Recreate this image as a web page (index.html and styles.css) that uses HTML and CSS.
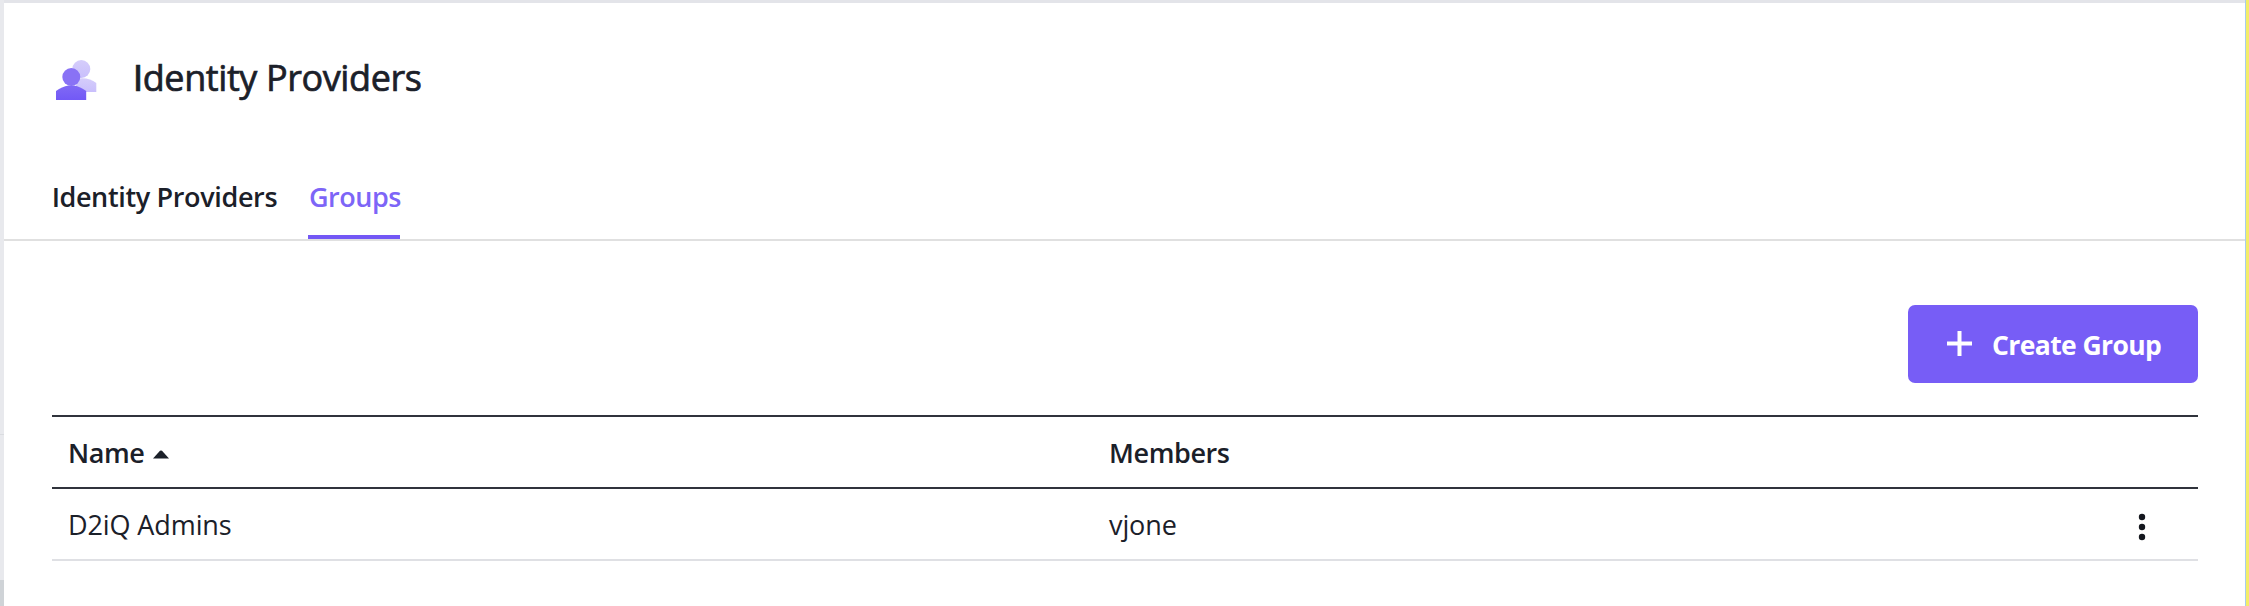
FILE: index.html
```html
<!DOCTYPE html>
<html lang="en">
<head>
<meta charset="utf-8">
<title>Identity Providers</title>
<link rel="stylesheet" href="styles.css">
</head>
<body>
<div class="app">
  <aside class="rail"><div class="rail-top"></div><div class="rail-mid"></div><div class="rail-foot"></div></aside>
  <main class="page">
    <header class="header">
      <svg class="logo" width="42" height="42" viewBox="0 0 42 42">
        <defs>
          <linearGradient id="front" x1="0" y1="0" x2="0" y2="1"><stop offset="0" stop-color="#8069f5"/><stop offset="1" stop-color="#7259f6"/></linearGradient>
          <linearGradient id="back" x1="0" y1="0" x2="0" y2="1"><stop offset="0" stop-color="#d5cdfb"/><stop offset="1" stop-color="#c9bffc"/></linearGradient>
        </defs>
        <g fill="url(#back)"><circle cx="25.3" cy="10" r="9"/><path d="M20 20C28 18 35 20 40.3 24V33H20Z"/></g>
        <circle cx="15.3" cy="18" r="9" fill="#8972f5"/>
        <path d="M0 41V32C4 29 8 27.500 12.500 26.500H18C22.500 27.500 26 29 30.200 32V41Z" fill="url(#front)"/>
      </svg>
      <h1 class="title"><span class="cap">I</span>dentity Providers</h1>
    </header>
    <nav class="tabs">
      <a class="tab tab-idp"><span class="cap">I</span>dentity Providers</a>
      <a class="tab tab-active">Groups</a>
    </nav>
    <section class="content">
      <div class="toolbar">
        <button class="create">
          <svg width="25" height="25" viewBox="0 0 25 25"><path d="M12.500 0V25M0 12.500H25" stroke="#fff" stroke-width="4"/></svg>
          <span class="create-label">Create Group</span>
        </button>
      </div>
      <div class="table">
        <div class="row head">
          <div class="cell name">Name
            <svg class="sort" width="16" height="9" viewBox="0 0 16 9"><path d="M0 8.500L7 .8Q8 0 9 .8L16 8.500Z" fill="#1b2029"/></svg>
          </div>
          <div class="cell">Members</div>
        </div>
        <div class="row body">
          <div class="cell">D2iQ Admins</div>
          <div class="cell">vjone</div>
          <svg class="more" width="8" height="28" viewBox="0 0 8 28" fill="#14171e"><circle cx="4" cy="4" r="3.200"/><circle cx="4" cy="14" r="3.200"/><circle cx="4" cy="24" r="3.200"/></svg>
        </div>
      </div>
    </section>
  </main>
  <div class="edge"></div>
</div>
</body>
</html>
```

FILE: styles.css
```css
* { box-sizing: border-box; }
body { margin: 0; background: #fff; color: #1b2029; font-family: "Open Sans", "Noto Sans", sans-serif; }
.app { display: flex; height: 606px; overflow: hidden; }
.rail { width: 4px; display: flex; flex-direction: column; background: #e8e9ed; }
.rail-top { height: 435px; border-bottom: 1px solid #dadce0; }
.rail-mid { height: 145px; }
.rail-foot { flex: 1; background: #cfd3d7; }
.page { flex: 1; min-width: 0; border-top: 3px solid #e3e4e9; }
.edge { width: 4px; background: #f3ed68; border-left: 1px solid #a9cdec; }
.header { display: flex; height: 171px; padding: 56px 0 0 52px; }
.logo { flex: none; }
.cap { font-family: Lato, sans-serif; }
.title { margin: -7px 0 0 35px; height: 50px; font-size: 36px; line-height: 50px; font-weight: 400; letter-spacing: -.4px; -webkit-text-stroke: .7px #1b2029; white-space: nowrap; }
.tabs { display: flex; gap: 31px; height: 67px; padding-left: 48px; border-bottom: 2px solid #e0e0e0; }
.tab { height: 65px; line-height: 46px; font-size: 27px; font-weight: 600; letter-spacing: -.35px; white-space: nowrap; }
.tab-idp { width: 225px; }
.tab-active { width: 92px; padding-left: 1px; letter-spacing: -.5px; color: #7d65f7; border-bottom: 4px solid #7358f5; }
.content { padding: 64px 47px 0 48px; }
.toolbar { display: flex; justify-content: flex-end; }
.create { display: flex; align-items: center; gap: 20px; width: 290px; height: 78px; padding: 0 0 0 39px; border: 0; border-radius: 7px; background: #775df6; color: #fff; font: 700 26.5px "Open Sans", sans-serif; letter-spacing: -.6px; white-space: nowrap; }
.create svg { flex: none; margin-top: -2px; }
.create-label { margin-top: 2px; }
.table { margin-top: 32px; }
.row { display: grid; grid-template-columns: 1041px 1fr auto; align-items: center; height: 72px; padding: 0 52px 0 16px; font-size: 27px; letter-spacing: -.1px; }
.head { height: 74px; border-top: 2px solid #30333c; border-bottom: 2px solid #30333c; font-weight: 600; letter-spacing: -.4px; }
.body { border-bottom: 2px solid #dfe0e4; }
.name { display: flex; align-items: center; }
.sort { margin: 4px 0 0 8px; }
.more { display: block; margin-top: 5px; }
```
